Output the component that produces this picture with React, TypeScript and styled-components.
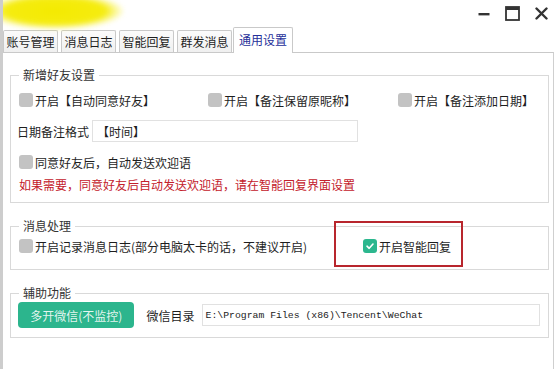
import React from 'react';
import styled, { createGlobalStyle, css } from 'styled-components';

const GlobalStyle = createGlobalStyle`
  html, body {
    margin: 0;
    padding: 0;
    background: #ffffff;
  }
  body {
    font-family: "Noto Sans CJK SC", "Noto Sans", sans-serif;
    font-size: 12px;
    color: #1e1e1e;
  }
`;

const Window = styled.div`
  width: 556px;
  height: 369px;
  box-sizing: border-box;
  border-left: 3px solid #cdcdcd;
  background: #ffffff;
  display: flex;
  flex-direction: column;
  overflow: hidden;
`;

const TitleBar = styled.div`
  height: 27px;
  flex-shrink: 0;
  display: flex;
  align-items: flex-start;
  justify-content: space-between;
`;

// blurred-out window title
const Smudge = styled.div`
  width: 136px;
  height: 36px;
  margin: -7px 0 0 -16px;
  border-radius: 50%;
  background: radial-gradient(ellipse at 50% 50%, #f4ea00 0%, #f5ec10 52%, rgba(250, 244, 110, 0.5) 66%, rgba(255, 250, 180, 0) 76%);
  filter: blur(2.5px);
`;

const Controls = styled.div`
  display: flex;
  align-items: center;
  gap: 15px;
  height: 27px;
  padding-right: 8px;
  color: #333;
`;

const TabRow = styled.div`
  height: 25px;
  flex-shrink: 0;
  display: flex;
  align-items: flex-end;
`;

const Tab = styled.div<{ $active?: boolean }>`
  box-sizing: border-box;
  width: 55px;
  height: 22px;
  margin-right: 3px;
  border: 1px solid #c9c9c9;
  border-bottom: none;
  border-radius: 2px 2px 0 0;
  background: linear-gradient(#fbfbfb, #f0f0f0);
  display: flex;
  align-items: center;
  justify-content: center;
  font-size: 12px;
  color: #1e1e1e;
  white-space: nowrap;

  ${({ $active }) => $active && css`
    position: relative;
    z-index: 1;
    width: 60px;
    height: 26px;
    margin-left: -2px;
    margin-bottom: -1px;
    padding-bottom: 2px;
    background: #ffffff;
    color: #25309a;
  `}
`;

const Panel = styled.div`
  flex: 1;
  margin-right: 2px;
  border-top: 1px solid #c9c9c9;
  border-right: 1px solid #cfcfcf;
  padding: 14px 4px 0 7px;
  display: flex;
  flex-direction: column;
`;

const Group = styled.fieldset<{ $gap?: number; $bottom: number }>`
  margin: ${({ $gap }) => $gap ?? 0}px 0 0 0;
  padding: 0 8px ${({ $bottom }) => $bottom}px 8px;
  border: 1px solid #d9d9d9;
  min-width: 0;
  display: flex;
  flex-direction: column;
`;

const Legend = styled.legend`
  padding: 0 4px;
  font-size: 12px;
  line-height: 16px;
  color: #333;
`;

const Row = styled.div<{ $top: number }>`
  margin-top: ${({ $top }) => $top}px;
  height: 20px;
  display: flex;
  align-items: center;
`;

const CheckGrid = styled(Row)`
  display: grid;
  grid-template-columns: 189px 190px auto;
  align-items: center;
`;

const MsgGrid = styled(Row)`
  display: grid;
  grid-template-columns: 344px auto;
  align-items: center;
`;

const CheckItem = styled.label`
  display: inline-flex;
  align-items: center;
  gap: 2px;
  white-space: nowrap;
  color: #1e1e1e;
`;

const HighlightItem = styled(CheckItem)`
  position: relative;
  justify-self: start;

  &::after {
    content: '';
    position: absolute;
    top: -17px;
    bottom: -12px;
    left: -29px;
    right: -12px;
    border: 2px solid #b8262d;
  }
`;

const Box = styled.span<{ $checked?: boolean }>`
  width: 14px;
  height: 14px;
  border-radius: 3px;
  background: ${({ $checked }) => ($checked ? '#2cb78e' : '#c3c3c3')};
  display: inline-flex;
  align-items: center;
  justify-content: center;
  flex-shrink: 0;
`;

const FieldRow = styled.div`
  margin-top: 10px;
  height: 22px;
  display: flex;
  align-items: center;
  gap: 3px;
`;

const FieldLabel = styled.span`
  margin-left: -2px;
  white-space: nowrap;
`;

const TextBox = styled.div<{ $width: number; $mono?: boolean }>`
  box-sizing: border-box;
  width: ${({ $width }) => $width}px;
  height: 22px;
  border: 1px solid #e1e1e1;
  background: #ffffff;
  display: flex;
  align-items: center;
  padding-left: 4px;
  white-space: nowrap;
  ${({ $mono }) => $mono && css`
    font-family: "Liberation Mono", "DejaVu Sans Mono", monospace;
    font-size: 9.8px;
    color: #222;
    padding-left: 3px;
  `}
`;

const Notice = styled.div`
  margin-top: 4px;
  height: 18px;
  line-height: 18px;
  color: #c3202b;
  white-space: nowrap;
`;

const ToolRow = styled.div`
  margin-top: 1px;
  height: 26px;
  display: flex;
  align-items: center;
`;

const GreenButton = styled.button`
  box-sizing: border-box;
  margin-left: -1px;
  width: 117px;
  height: 26px;
  border: none;
  border-radius: 4px;
  background: #2cb58d;
  color: rgba(255, 255, 255, 0.88);
  font-family: inherit;
  font-size: 12px;
  padding: 0;
`;

const DirLabel = styled.span`
  margin: 0 7px 0 12px;
  white-space: nowrap;
`;

const Tick = () => (
  <svg width="10" height="10" viewBox="0 0 10 10">
    <path d="M2 5.2 L4.2 7.3 L8 3" fill="none" stroke="#fff" strokeWidth="1.6" strokeLinecap="round" strokeLinejoin="round" />
  </svg>
);

const Check: React.FC<{ checked?: boolean; children: React.ReactNode }> = ({ checked, children }) => (
  <CheckItem>
    <Box $checked={checked}>{checked && <Tick />}</Box>
    {children}
  </CheckItem>
);

const tabs = ['账号管理', '消息日志', '智能回复', '群发消息', '通用设置'];

export default function App() {
  return (
    <>
      <GlobalStyle />
      <Window>
        <TitleBar>
          <Smudge />
          <Controls>
            <svg width="12" height="12" viewBox="0 0 12 12">
              <rect x="0.5" y="5" width="11" height="2.4" fill="#333" />
            </svg>
            <svg width="15" height="15" viewBox="0 0 15 15">
              <rect x="1" y="1" width="13" height="13" fill="none" stroke="#333" strokeWidth="1.8" />
              <rect x="1" y="1" width="13" height="3" fill="#333" />
            </svg>
            <svg width="13" height="13" viewBox="0 0 13 13">
              <path d="M1.5 1.5 L11.5 11.5 M11.5 1.5 L1.5 11.5" stroke="#333" strokeWidth="2.4" strokeLinecap="round" />
            </svg>
          </Controls>
        </TitleBar>

        <TabRow>
          {tabs.map((t, i) => (
            <Tab key={t} $active={i === tabs.length - 1}>{t}</Tab>
          ))}
        </TabRow>

        <Panel>
          <Group $bottom={8}>
            <Legend>新增好友设置</Legend>
            <CheckGrid $top={7}>
              <Check>开启【自动同意好友】</Check>
              <Check>开启【备注保留原昵称】</Check>
              <Check>开启【备注添加日期】</Check>
            </CheckGrid>
            <FieldRow>
              <FieldLabel>日期备注格式</FieldLabel>
              <TextBox $width={266}>【时间】</TextBox>
            </FieldRow>
            <Row $top={10}>
              <Check>同意好友后，自动发送欢迎语</Check>
            </Row>
            <Notice>如果需要，同意好友后自动发送欢迎语，请在智能回复界面设置</Notice>
          </Group>

          <Group $gap={15} $bottom={13}>
            <Legend>消息处理</Legend>
            <MsgGrid $top={2}>
              <Check>开启记录消息日志(部分电脑太卡的话，不建议开启)</Check>
              <HighlightItem>
                <Box $checked><Tick /></Box>
                开启智能回复
              </HighlightItem>
            </MsgGrid>
          </Group>

          <Group $gap={15} $bottom={9}>
            <Legend>辅助功能</Legend>
            <ToolRow>
              <GreenButton>多开微信(不监控)</GreenButton>
              <DirLabel>微信目录</DirLabel>
              <TextBox $width={340} $mono>E:\Program Files (x86)\Tencent\WeChat</TextBox>
            </ToolRow>
          </Group>
        </Panel>
      </Window>
    </>
  );
}
